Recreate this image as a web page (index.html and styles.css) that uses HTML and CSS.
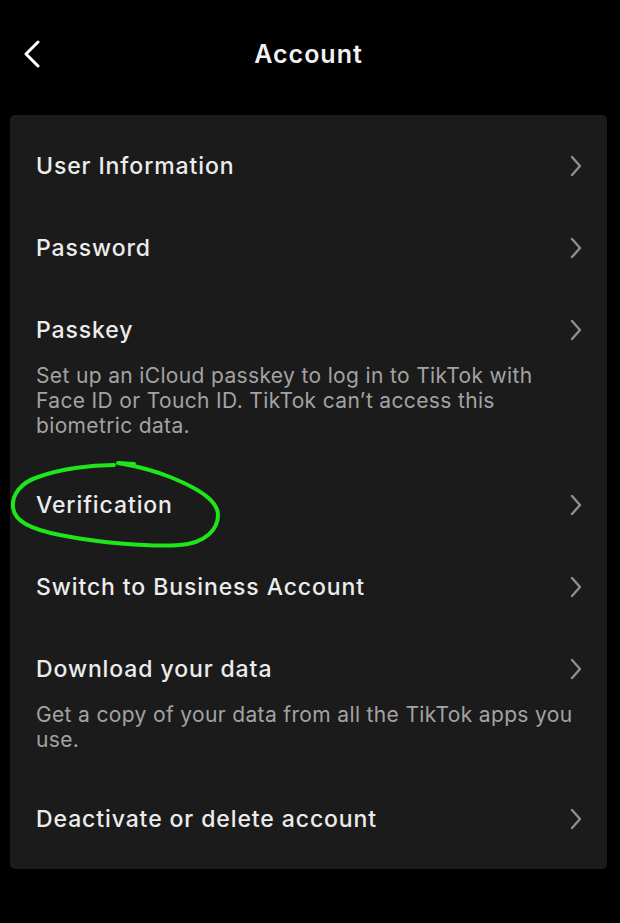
FILE: index.html
```html
<!DOCTYPE html>
<html lang="en">
<head>
  <meta charset="UTF-8" />
  <meta name="viewport" content="width=device-width, initial-scale=1.0"/>
  <title>Account</title>
  <link rel="stylesheet" href="styles.css">
</head>
<body>
  <div class="screen">
    <header class="topbar">
      <button class="back" aria-label="Back">
        <svg width="18" height="28" viewBox="0 0 18 28"><path d="M15 2 L3 14 L15 26" fill="none" stroke="#fff" stroke-width="3" stroke-linecap="round" stroke-linejoin="round"/></svg>
      </button>
      <h1>Account</h1>
    </header>

    <div class="card">
      <div class="row">
        <div class="row-head"><span class="row-title">User Information</span><svg class="chev" width="12" height="22" viewBox="0 0 12 22"><path d="M2 2 L10 11 L2 20"/></svg></div>
      </div>
      <div class="row">
        <div class="row-head"><span class="row-title">Password</span><svg class="chev" width="12" height="22" viewBox="0 0 12 22"><path d="M2 2 L10 11 L2 20"/></svg></div>
      </div>
      <div class="row has-desc">
        <div class="row-head"><span class="row-title">Passkey</span><svg class="chev" width="12" height="22" viewBox="0 0 12 22"><path d="M2 2 L10 11 L2 20"/></svg></div>
        <p class="row-desc">Set up an iCloud passkey to log in to TikTok with Face ID or Touch ID. TikTok can’t access this biometric data.</p>
      </div>
      <div class="row">
        <div class="row-head"><span class="row-title">Verification</span><svg class="chev" width="12" height="22" viewBox="0 0 12 22"><path d="M2 2 L10 11 L2 20"/></svg></div>
      </div>
      <div class="row">
        <div class="row-head"><span class="row-title">Switch to Business Account</span><svg class="chev" width="12" height="22" viewBox="0 0 12 22"><path d="M2 2 L10 11 L2 20"/></svg></div>
      </div>
      <div class="row has-desc">
        <div class="row-head"><span class="row-title">Download your data</span><svg class="chev" width="12" height="22" viewBox="0 0 12 22"><path d="M2 2 L10 11 L2 20"/></svg></div>
        <p class="row-desc">Get a copy of your data from all the TikTok apps you use.</p>
      </div>
      <div class="row">
        <div class="row-head"><span class="row-title">Deactivate or delete account</span><svg class="chev" width="12" height="22" viewBox="0 0 12 22"><path d="M2 2 L10 11 L2 20"/></svg></div>
      </div>

      <!-- hand drawn highlight round "Verification" -->
      <svg class="scribble" width="230" height="95" viewBox="0 0 230 95">
        <path d="M104 4 C80 4 50 8 28 16 C10 22 2 34 3 46 C4 60 20 68 50 74 C90 82 140 86 170 84 C196 82 208 68 208 54 C208 40 190 28 160 16 C140 8 120 4 108 2 L124 3"
              fill="none" stroke="#1ee61a" stroke-width="4" stroke-linecap="round" stroke-linejoin="round"/>
      </svg>
    </div>
  </div>
</body>
</html>
```

FILE: styles.css
```css
* { box-sizing: border-box; }

body {
  margin: 0;
  background: #000;
  color: #ececec;
  font-family: 'Inter', 'Liberation Sans', sans-serif;
}

.screen {
  width: 620px;
  height: 923px;
  padding: 0 13px 0 10px;
}

.topbar {
  position: relative;
  height: 115px;
  display: flex;
  align-items: flex-start;
  justify-content: center;
  padding-top: 36px;
}

.topbar h1 {
  margin: 0;
  font-size: 25px;
  font-weight: 600;
  line-height: 36px;
  letter-spacing: 1px;
  color: #f2f2f2;
}

.back {
  position: absolute;
  left: 13px;
  top: 40px;
  background: none;
  border: none;
  padding: 0;
  cursor: pointer;
}

.card {
  position: relative;
  background: #1b1b1b;
  border-radius: 5px;
  padding: 10px 25px 9px 26px;
}

.row {
  padding: 20px 0;
}

.row.has-desc {
  padding-bottom: 26px;
}

.row-head {
  display: flex;
  align-items: center;
  justify-content: space-between;
  height: 42px;
}

.row-title {
  font-size: 23px;
  font-weight: 500;
  letter-spacing: 0.9px;
  color: #ececec;
}

.chev {
  fill: none;
  stroke: #8e8e8e;
  stroke-width: 2.4;
  stroke-linecap: round;
  stroke-linejoin: round;
}

.row-desc {
  margin: 12px 0 0;
  padding-right: 5px;
  font-size: 21px;
  line-height: 25px;
  letter-spacing: 0.35px;
  color: #a3a3a3;
}

.scribble {
  position: absolute;
  left: 0;
  top: 346px;
}
```
